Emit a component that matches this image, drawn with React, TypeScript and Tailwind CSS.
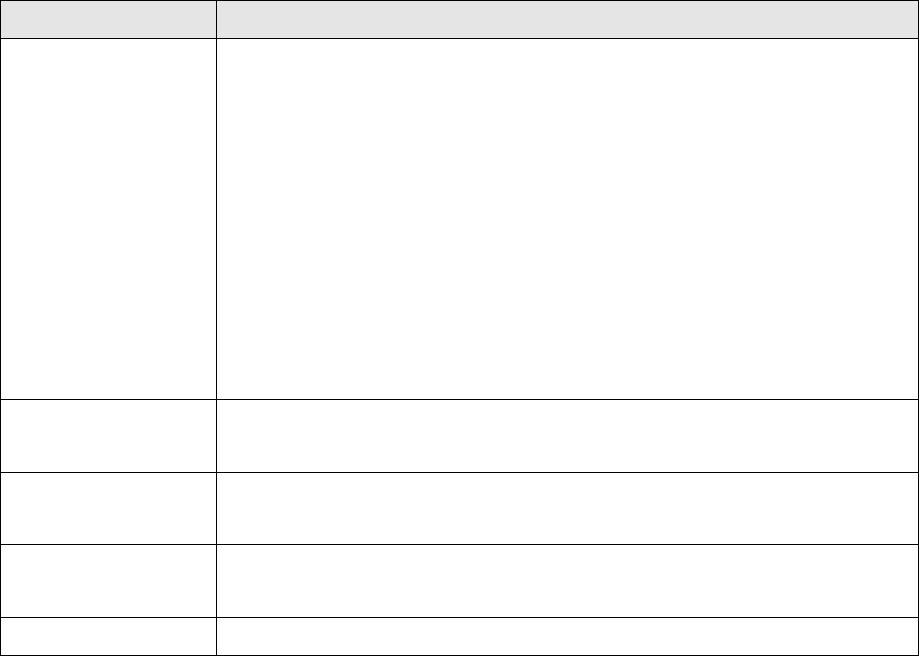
import React from "react";

const rows = [
  { id: 1, h: "h-[361px]" },
  { id: 2, h: "h-[73px]" },
  { id: 3, h: "h-[72px]" },
  { id: 4, h: "h-[73px]" },
  { id: 5, h: "h-[38px]" },
];

const App: React.FC = () => {
  return (
    <div className="w-[919px] h-[656px] bg-white" style={{ fontFamily: '"Liberation Sans", Arial, sans-serif' }}>
      <table className="w-[919px] border-collapse table-fixed text-sm text-black">
        <colgroup>
          <col className="w-[216px]" />
          <col />
        </colgroup>
        <thead>
          <tr className="h-[38px] bg-[#e5e5e5]">
            <th className="border border-black"></th>
            <th className="border border-black"></th>
          </tr>
        </thead>
        <tbody>
          {rows.map((r) => (
            <tr key={r.id} className={r.h}>
              <td className="border border-black"></td>
              <td className="border border-black"></td>
            </tr>
          ))}
        </tbody>
      </table>
    </div>
  );
};

export default App;
